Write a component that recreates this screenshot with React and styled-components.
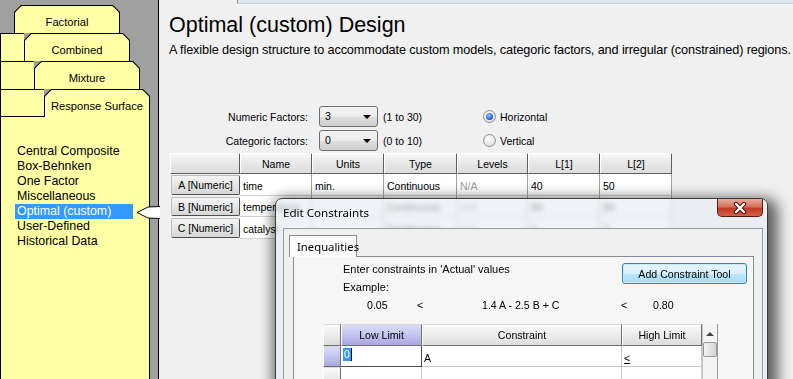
import styled, { createGlobalStyle } from "styled-components";

const GlobalStyle = createGlobalStyle`
  html, body {
    margin: 0;
    padding: 0;
    background: #a0a0a0;
  }
  body {
    font-family: "Liberation Sans", Arial, sans-serif;
    color: #000;
  }
  * {
    box-sizing: border-box;
  }
`

const Screen = styled.div`
  position: relative;
  display: flex;
  width: 793px;
  height: 379px;
  overflow: hidden;
  background: #a0a0a0;
`

/* ---------- left tab stack ---------- */

const Sidebar = styled.div`
  display: flex;
  flex-direction: column;
  width: 150px;
  padding-top: 5px;
`

const TabRow = styled.div`
  display: flex;
  height: 28px;
`

const Filler = styled.div`
  width: ${p => p.$w}px;
  background: ${p => (p.$blank ? "transparent" : "#ffffa6")};
  border-top: ${p => (p.$blank ? "none" : "1px solid #000")};
  border-left: ${p => (p.$blank ? "none" : "1px solid #000")};
  border-bottom: ${p => (p.$last ? "1px solid #000" : "none")};
`

const Tab = styled.div`
  width: 106px;
  height: 28px;
  padding: 1px 1px 0 1px;
  background: #000;
  clip-path: polygon(7px 0, calc(100% - 7px) 0, 100% 7px, 100% 100%, 0 100%, 0 7px);
`

const TabFace = styled.div`
  display: flex;
  align-items: center;
  justify-content: center;
  height: 100%;
  padding-top: 4px;
  background: #ffffa6;
  font-size: 11.2px;
  clip-path: polygon(6.5px 0, calc(100% - 6.5px) 0, 100% 6.5px, 100% 100%, 0 100%, 0 6.5px);
`

const SideBody = styled.div`
  flex: 1;
  padding: 27px 0 0 14px;
  background: #ffffa6;
  border-left: 1px solid #000;
  border-right: 1px solid #000;
`

const DesignItem = styled.div`
  width: 118px;
  height: 15px;
  padding-left: 2px;
  line-height: 15px;
  font-size: 12.4px;
  white-space: nowrap;
  color: ${p => (p.$active ? "#fff" : "#000")};
  background: ${p => (p.$active ? "#3399ff" : "transparent")};
`

const PointerSvg = styled.svg`
  position: absolute;
  left: 136px;
  top: 205px;
`

/* ---------- main area ---------- */

const Main = styled.div`
  display: flex;
  flex-direction: column;
  flex: 1;
  margin-left: 8px;
  background: #f0f0f0;
  border-left: 1px solid #000;
`

const TopStrip = styled.div`
  height: 4px;
  margin-left: 78px;
  background: #dfe6f3;
  border-left: 1px solid #8a8a8a;
  border-bottom: 1px solid #c9d2e2;
`

const Title = styled.div`
  margin: 9px 0 0 10px;
  font-size: 21.5px;
  line-height: 25px;
  white-space: nowrap;
`

const Subtitle = styled.div`
  margin: 5px 0 0 10px;
  font-size: 12.7px;
  line-height: 15px;
  letter-spacing: -0.12px;
  white-space: nowrap;
`

const Form = styled.div`
  display: flex;
  flex-direction: column;
  gap: 3px;
  margin-top: 48px;
`

const FormRow = styled.div`
  display: flex;
  align-items: center;
  height: 21px;
  font-size: 10.5px;
`

const FieldLabel = styled.div`
  width: 149px;
  text-align: right;
`

const Select = styled.div`
  position: relative;
  width: 59px;
  height: 21px;
  margin-left: 11px;
  padding-left: 5px;
  line-height: 19px;
  border: 1px solid #707070;
  border-radius: 3px;
  background: linear-gradient(#f3f3f3, #ebebeb 50%, #dddddd 51%, #cfcfcf);

  &::after {
    content: "";
    position: absolute;
    right: 6px;
    top: 8px;
    border-left: 4px solid transparent;
    border-right: 4px solid transparent;
    border-top: 4px solid #000;
  }
`

const Hint = styled.div`
  width: 100px;
  margin-left: 5px;
`

const Radio = styled.div`
  display: flex;
  align-items: center;
  gap: 4px;
`

const RadioDot = styled.span`
  position: relative;
  width: 13px;
  height: 13px;
  border: 1px solid #8e8f8f;
  border-radius: 50%;
  background: radial-gradient(circle at 40% 35%, #ffffff, #d6d6d6);

  &::after {
    content: "";
    display: ${p => (p.$on ? "block" : "none")};
    position: absolute;
    left: 2px;
    top: 2px;
    width: 7px;
    height: 7px;
    border-radius: 50%;
    background: radial-gradient(circle at 40% 35%, #8fc4ff, #1a5fc8 70%, #0d3f8f);
  }
`

const FactorTable = styled.div`
  display: grid;
  grid-template-columns: 70px 72px 72px 73px 71px 72px 72px;
  grid-template-rows: 21px 22px 21px 22px;
  width: 502px;
  margin: 2px 0 0 11px;
  font-size: 10.5px;
`

const HeadCell = styled.div`
  display: flex;
  align-items: center;
  justify-content: center;
  background: linear-gradient(#f7f7f7, #e6e6e6 55%, #dcdcdc);
  border-top: 1px solid #ffffff;
  border-left: 1px solid #ffffff;
  border-right: 1px solid #5f5f5f;
  border-bottom: 1px solid #5f5f5f;
`

const RowHead = styled.div`
  display: flex;
  align-items: center;
  justify-content: center;
  margin: 1px 0 1px 1px;
  background: linear-gradient(#f4f4f4, #e4e4e4 55%, #d6d6d6);
  border: 1px solid #bdbdbd;
  border-right-color: #4f4f4f;
  border-bottom-color: #4f4f4f;
  border-radius: 2px;
`

const Cell = styled.div`
  display: flex;
  align-items: flex-end;
  padding: 0 0 3px 3px;
  background: #fff;
  border-right: 1px solid #a0a0a0;
  border-bottom: 1px solid #d0d0d0;
  color: ${p => (p.$muted ? "#a0a0a0" : "#000")};
  white-space: nowrap;
  overflow: hidden;
`

/* ---------- dialog ---------- */

const Dialog = styled.div`
  position: absolute;
  left: 275px;
  top: 198px;
  width: 493px;
  height: 240px;
  padding: 0 4px 0 7px;
  border: 1px solid #3c3c3c;
  border-radius: 7px 7px 0 0;
  background: rgba(232, 236, 242, 0.68);
  backdrop-filter: blur(2.5px);
  box-shadow: 4px 6px 14px 6px rgba(0, 0, 0, 0.6);
`

const TitleBar = styled.div`
  display: flex;
  justify-content: space-between;
  height: 29px;
`

const DialogTitle = styled.div`
  padding-top: 5px;
  font-family: "Noto Sans", "Open Sans", sans-serif;
  font-size: 11.6px;
  line-height: 18px;
`

const CloseButton = styled.div`
  display: flex;
  align-items: center;
  justify-content: center;
  width: 46px;
  height: 18px;
  border: 1px solid #5b1b12;
  border-top: none;
  border-radius: 0 0 5px 5px;
  background: linear-gradient(#e9a99c, #d4735f 45%, #c0391f 55%, #d1624a);
`

const Client = styled.div`
  height: 220px;
  padding-top: 6px;
  background: #f0f0f0;
  border: 1px solid #8f9aa6;
`

const PageTab = styled.div`
  position: relative;
  z-index: 1;
  width: 68px;
  height: 22px;
  margin-left: 5px;
  padding: 3px 0 0 7px;
  font-family: "Noto Sans", "Open Sans", sans-serif;
  font-size: 11.3px;
  background: #fcfcfc;
  border: 1px solid #898c95;
  border-bottom: none;
`

const Page = styled.div`
  height: 180px;
  margin: -1px 8px 0 9px;
  background: #f6f6f6;
  border: 1px solid #898c95;
`

const PageTop = styled.div`
  display: flex;
  justify-content: space-between;
  padding-top: 3px;
`

const Notes = styled.div`
  padding-left: 49px;
  font-size: 11px;
  line-height: 18px;
`

const ToolButton = styled.div`
  display: flex;
  align-items: center;
  justify-content: center;
  width: 125px;
  height: 21px;
  margin: 3px 6px 0 0;
  font-size: 10.6px;
  border: 1px solid #3c7fb1;
  border-radius: 3px;
  background: linear-gradient(#eaf6fd, #d9f0fc 50%, #bee6fd 51%, #a7d9f5);
  box-shadow: inset 0 0 0 1px #c6ecfc;
`

const ExampleRow = styled.div`
  display: grid;
  grid-template-columns: 50px 65px 139px 32px auto;
  height: 18px;
  padding-left: 73px;
  font-size: 10.6px;
  line-height: 18px;
`

const ConstraintGrid = styled.div`
  display: grid;
  grid-template-columns: 18px 81px 200px 80px 16px;
  grid-template-rows: 22px 21px 21px;
  width: 395px;
  margin: 10px 0 0 29px;
  font-size: 10.6px;
`

const GridHead = styled.div`
  display: flex;
  align-items: center;
  justify-content: center;
  background: ${p =>
    p.$sel
      ? "linear-gradient(#dcdcf8, #c4c4f0 50%, #a8a8e0)"
      : "linear-gradient(#fafafa, #ececec 50%, #dcdcdc)"};
  border-right: 1px solid #707070;
  border-bottom: 1px solid #707070;
  border-left: 1px solid #ffffff;
  border-top: 1px solid #d8d8d8;
`

const GridCell = styled.div`
  display: flex;
  align-items: flex-end;
  padding: 0 0 2px 2px;
  background: #fff;
  border-right: 1px solid ${p => (p.$focus ? "#505050" : "#c8c8c8")};
  border-bottom: 1px solid ${p => (p.$focus ? "#505050" : "#c8c8c8")};
`

const Selected = styled.span`
  align-self: flex-start;
  margin-top: 2px;
  padding: 0 1px;
  line-height: 13px;
  color: #fff;
  background: #3399ff;
  border-right: 1px solid #000;
`

const LessEqual = styled.span`
  text-decoration: underline;
`

const ScrollBar = styled.div`
  grid-column: 5;
  grid-row: 1 / span 3;
  position: relative;
  background: #f4f4f4;
  border-left: 1px solid #c4c4c4;
  border-right: 1px solid #9a9a9a;

  &::before {
    content: "";
    position: absolute;
    left: 3px;
    top: 8px;
    border-left: 4px solid transparent;
    border-right: 4px solid transparent;
    border-bottom: 4px solid #444;
  }
`

const Thumb = styled.div`
  position: absolute;
  left: 0;
  top: 18px;
  width: 14px;
  height: 15px;
  border: 1px solid #979797;
  border-radius: 2px;
  background: linear-gradient(90deg, #f2f2f2, #e2e2e2 50%, #d4d4d4);
`

const designs = [
  "Central Composite",
  "Box-Behnken",
  "One Factor",
  "Miscellaneous",
  "Optimal (custom)",
  "User-Defined",
  "Historical Data",
]

const tabs = [
  { label: "Factorial", left: 14 },
  { label: "Combined", left: 24 },
  { label: "Mixture", left: 34 },
  { label: "Response Surface", left: 44 },
]

const factors = [
  ["A [Numeric]", "time", "min.", "Continuous", "N/A", "40", "50"],
  ["B [Numeric]", "temperature", "", "Continuous", "N/A", "80", "90"],
  ["C [Numeric]", "catalyst", "", "Continuous", "N/A", "1", "2"],
]

const App = () => {
  return (
    <Screen>
      <GlobalStyle />
      <Sidebar>
        {tabs.map((t, i) => (
          <TabRow key={t.label}>
            <Filler $w={t.left} $blank={i === 0} $last={i === tabs.length - 1} />
            <Tab>
              <TabFace>{t.label}</TabFace>
            </Tab>
          </TabRow>
        ))}
        <SideBody>
          {designs.map(d => (
            <DesignItem key={d} $active={d === "Optimal (custom)"}>{d}</DesignItem>
          ))}
        </SideBody>
      </Sidebar>

      <PointerSvg width="24" height="16" viewBox="0 0 24 16">
        <path d="M24 1.5 L12 2 L1 7.5 L12 13 L24 13.5 Z" fill="#fff" />
        <path d="M24 1.5 L12 2 L1 7.5 L12 13 L24 13.5" fill="none" stroke="#000" strokeWidth="1" />
      </PointerSvg>

      <Main>
        <TopStrip />
        <Title>Optimal (custom) Design</Title>
        <Subtitle>
          A flexible design structure to accommodate custom models, categoric factors, and irregular (constrained) regions.
        </Subtitle>

        <Form>
          <FormRow>
            <FieldLabel>Numeric Factors:</FieldLabel>
            <Select>3</Select>
            <Hint>(1 to 30)</Hint>
            <Radio>
              <RadioDot $on />
              Horizontal
            </Radio>
          </FormRow>
          <FormRow>
            <FieldLabel>Categoric factors:</FieldLabel>
            <Select>0</Select>
            <Hint>(0 to 10)</Hint>
            <Radio>
              <RadioDot />
              Vertical
            </Radio>
          </FormRow>
        </Form>

        <FactorTable>
          <HeadCell />
          <HeadCell>Name</HeadCell>
          <HeadCell>Units</HeadCell>
          <HeadCell>Type</HeadCell>
          <HeadCell>Levels</HeadCell>
          <HeadCell>L[1]</HeadCell>
          <HeadCell>L[2]</HeadCell>
          {factors.map(row => [
            <RowHead key={row[0]}>{row[0]}</RowHead>,
            ...row.slice(1).map((v, j) => (
              <Cell key={row[0] + j} $muted={v === "N/A"}>{v}</Cell>
            )),
          ])}
        </FactorTable>
      </Main>

      <Dialog>
        <TitleBar>
          <DialogTitle>Edit Constraints</DialogTitle>
          <CloseButton>
            <svg width="14" height="12" viewBox="0 0 14 12">
              <path d="M3 2 L11 10 M11 2 L3 10" stroke="#4a1a14" strokeWidth="4.2" strokeLinecap="round" />
              <path d="M3 2 L11 10 M11 2 L3 10" stroke="#ffffff" strokeWidth="2.2" strokeLinecap="round" />
            </svg>
          </CloseButton>
        </TitleBar>
        <Client>
          <PageTab>Inequalities</PageTab>
          <Page>
            <PageTop>
              <Notes>
                <div>Enter constraints in 'Actual' values</div>
                <div>Example:</div>
              </Notes>
              <ToolButton>Add Constraint Tool</ToolButton>
            </PageTop>
            <ExampleRow>
              <span>0.05</span>
              <span>&lt;</span>
              <span>1.4 A - 2.5 B + C</span>
              <span>&lt;</span>
              <span>0.80</span>
            </ExampleRow>
            <ConstraintGrid>
              <GridHead />
              <GridHead $sel>Low Limit</GridHead>
              <GridHead>Constraint</GridHead>
              <GridHead>High Limit</GridHead>
              <ScrollBar>
                <Thumb />
              </ScrollBar>
              <GridHead $sel />
              <GridCell $focus>
                <Selected>0</Selected>
              </GridCell>
              <GridCell>A</GridCell>
              <GridCell>
                <LessEqual>&lt;</LessEqual>
              </GridCell>
              <GridHead />
              <GridCell />
              <GridCell />
              <GridCell />
            </ConstraintGrid>
          </Page>
        </Client>
      </Dialog>
    </Screen>
  )
}

export default App;
